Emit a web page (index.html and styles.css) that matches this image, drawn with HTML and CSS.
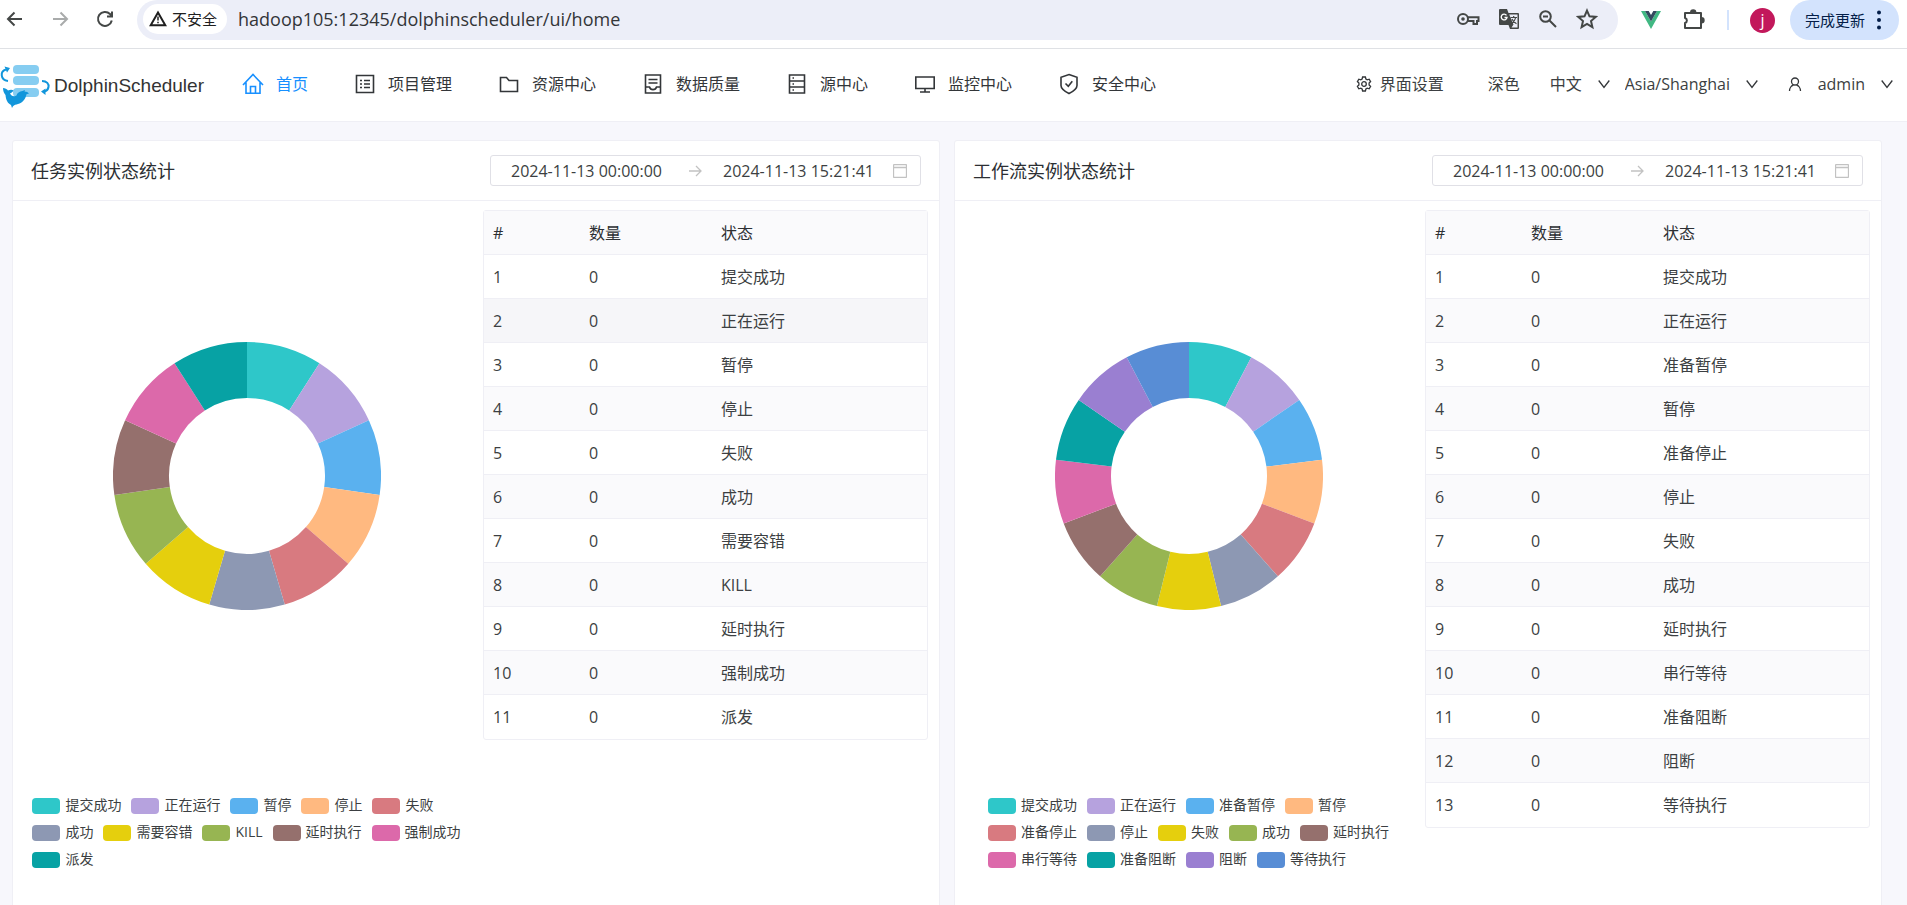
FILE: index.html
```html
<!DOCTYPE html>
<html lang="zh-CN">
<head>
  <meta charset="UTF-8" />
  <meta name="viewport" content="width=device-width, initial-scale=1.0" />
  <title>DolphinScheduler</title>
  <link rel="stylesheet" href="styles.css">
</head>
<body>
  <div class="browser-bar">
    <div class="history">
      <button class="tool" aria-label="后退"><svg width="20" height="20" viewBox="0 0 20 20"><path d="M17 10H3.5M9.500 3.500L3 10l6.500 6.500" /></svg></button>
      <button class="tool off" aria-label="前进" disabled><svg width="20" height="20" viewBox="0 0 20 20"><path d="M3 10h13.500M10.500 3.500L17 10l-6.500 6.500" /></svg></button>
      <button class="tool" aria-label="刷新"><svg width="20" height="20" viewBox="0 0 20 20"><path d="M16.800 11.500A7 7 0 1 1 15 5l1.500 1.500M17 2.500V7.500H12" /></svg></button>
    </div>
    <div class="omnibox">
      <button class="site-chip">
        <svg width="18" height="18" viewBox="0 0 18 18"><path d="M9 2.500L16.300 15.200H1.700z" /><path d="M9 6.500v4M9 11.800v1.500" stroke-width="1.500" /></svg>
        不安全
      </button>
      <input class="url" type="text" aria-label="地址" value="hadoop105:12345/dolphinscheduler/ui/home" />
      <button class="tool" aria-label="密码"><svg width="24" height="20" viewBox="0 0 24 20"><circle cx="7" cy="10" r="5" /><circle cx="7" cy="10" r="1.800" fill="#444746" stroke="none" /><path d="M11.500 8.200H22.500V12H21v3h-3.500v-3h-6" /></svg></button>
      <button class="tool" aria-label="翻译"><svg width="22" height="22" viewBox="0 0 22 22"><path d="M2 1h7l1.500 4H20a1 1 0 0 1 1 1v14a1 1 0 0 1-1 1h-8l-1.500-4H2a1 1 0 0 1-1-1V2a1 1 0 0 1 1-1z" fill="#444746" stroke="none" /><path d="M11.200 6.500H19.500V19.500H13.500l2-3z" fill="#eceef8" stroke="none" /><path d="M8.500 7.300A2.900 2.900 0 1 0 9 9.500H6.500" stroke="#fff" stroke-width="1.400" /><path d="M12.500 9.500h6.500M15.700 8v1.500M17.700 9.500c-.5 2.500-2 4.500-4 6M14 11c.8 2 2.500 3.700 4.500 4.800" stroke-width="1.200" /></svg></button>
      <button class="tool" aria-label="缩放"><svg width="20" height="20" viewBox="0 0 20 20"><circle cx="7.500" cy="7.500" r="5.300" /><path d="M11.500 11.500l6.500 6.500M5 7.500h5" /></svg></button>
      <button class="tool" aria-label="收藏"><svg width="22" height="22" viewBox="0 0 22 22"><path d="M11 2.600l2.500 5.700 6.200.6-4.700 4.100 1.400 6.100-5.400-3.200-5.400 3.200L7 13 2.300 8.900l6.200-.6z" /></svg></button>
    </div>
    <div class="extensions">
      <svg width="20" height="20" viewBox="0 0 20 20"><path d="M0 1h4l6 10.500L16 1h4L10 19z" fill="#41b883" /><path d="M4 1h3.700L10 5l2.300-4H16l-6 10.500z" fill="#34495e" /></svg>
      <button class="tool" aria-label="扩展程序"><svg width="24" height="24" viewBox="0 0 24 24"><path d="M3 5h16v15H3v-5a2.600 2.600 0 0 0 0-5z" stroke-linejoin="round" /><path d="M9 4.500a2.200 2.200 0 0 1 4.400 0zM19.500 10a2.200 2.200 0 0 1 0 4.400z" fill="#444746" /></svg></button>
      <span class="divider"></span>
      <button class="avatar">j</button>
      <button class="update">完成更新 <svg width="4" height="20" viewBox="0 0 4 20"><circle cx="2" cy="2.500" r="2" /><circle cx="2" cy="10" r="2" /><circle cx="2" cy="17.500" r="2" /></svg></button>
    </div>
  </div>

  <header class="navbar">
    <a href="#" class="logo">
      <svg width="50" height="44" viewBox="0 0 50 44">
        <g fill="#86cdf1"><rect x="13" y="1" width="26" height="9" rx="4" /><rect x="13" y="12" width="26" height="9" rx="4" /><rect x="13" y="24" width="26" height="9" rx="4" /></g>
        <g fill="none" stroke="#1296db" stroke-width="2"><path d="M8 17C0 16 0 7 6 5.500M42 17c5 0 7 3 6.500 6-.5 3-2 4-4 4.500" /></g>
        <path d="M4.500 2.500l5.500 1.500-3 4.500zM41 27.500l4.500-3V31z" fill="#1296db" />
        <path d="M3 24c2 .2 4 1 5 2.500 2-1 4-1 5.500-.2-.8 1.700-2 2.700-3.500 3C11 32 14 33 16.500 31.500c.5-2.500 3-4 6-4.500l2.500-1-.5 1.500c2 .2 3.500.8 4.500 2l-2.500.8c-1 5-4 8.500-8.500 9.700-2 .5-4 1-5 2.200L12 44l-1-3c-3-1.500-5-4.500-5.500-10C4 29 3 27 3 24z" fill="#1296db" />
      </svg>
      DolphinScheduler
    </a>
    <nav class="menu">
      <a href="#" class="active"><svg viewBox="0 0 22 22"><path d="M1 12L11 1.500 21 12M4 9.500V20.200h14V9.500M8.500 20v-6.500h5V20" /></svg>首页</a>
      <a href="#"><svg viewBox="0 0 22 22"><path d="M2.500 2.500h17v17h-17zM6 7.500h2M10 7.500h6M6 11h2M10 11h6M6 14.500h2M10 14.500h6" /></svg>项目管理</a>
      <a href="#"><svg viewBox="0 0 22 22"><path d="M2.500 4.500h6l2.500 3h8.500v11h-17z" /></svg>资源中心</a>
      <a href="#"><svg viewBox="0 0 22 22"><path d="M3.500 2h15v18h-15zM6.500 6.500h9M6.500 10h9M3.500 14h4c1 3.500 6 3.500 7 0h4" /></svg>数据质量</a>
      <a href="#"><svg viewBox="0 0 22 22"><path d="M3.500 2h15v18h-15zM3.500 8h15M3.500 14h15M6.500 5h1.500M6.500 11h1.500M6.500 17h1.500" /></svg>源中心</a>
      <a href="#"><svg viewBox="0 0 22 22"><path d="M1.800 4h18.400v11.500H1.800zM11 15.500v3.500M6 19h10" /></svg>监控中心</a>
      <a href="#"><svg viewBox="0 0 22 22"><path d="M11 1.500l8 2.700v8.300c0 3-4 6-8 8-4-2-8-5-8-8V4.200zM7.500 10.500l2.800 2.800 4-5" /></svg>安全中心</a>
    </nav>
    <div class="settings">
      <button class="ui-setting"><svg width="16" height="16" viewBox="0 0 16 16"><path d="M6.600 1h2.800l.5 2 1.300.8 2-.6 1.400 2.400-1.500 1.400v2l1.500 1.400-1.400 2.400-2-.6-1.300.8-.5 2H6.600l-.5-2-1.300-.8-2 .6-1.400-2.400L2.900 9V7L1.400 5.600l1.400-2.400 2 .6L6.100 3z" /><circle cx="8" cy="8" r="2.300" /></svg>界面设置</button>
      <button class="theme">深色</button>
      <label class="drop">
        <select aria-label="语言"><option>中文</option></select>
        <svg width="12" height="12" viewBox="0 0 12 12"><path d="M.7 2.500L6 9.500l5.300-7" /></svg>
      </label>
      <label class="drop">
        <select aria-label="时区"><option>Asia/Shanghai</option></select>
        <svg width="12" height="12" viewBox="0 0 12 12"><path d="M.7 2.500L6 9.500l5.300-7" /></svg>
      </label>
      <button class="user">
        <svg width="14" height="16" viewBox="0 0 14 16"><circle cx="7" cy="5.500" r="3.500" /><path d="M1.500 15c0-3 2-5.500 4-6M12.500 15c0-3-2-5.500-4-6" /></svg>
        admin
        <svg width="12" height="12" viewBox="0 0 12 12"><path d="M.7 2.500L6 9.500l5.300-7" /></svg>
      </button>
    </div>
  </header>

  <main id="cards"></main>

  <script>
    const colors = ['#2ec7c9', '#b6a2de', '#5ab1ef', '#ffb980', '#d87a80', '#8d98b3', '#e5cf0d',
      '#97b552', '#95706d', '#dc69aa', '#07a2a4', '#9a7fd1', '#588dd5'];

    // each inner list is one line of the legend
    const cards = [
      {
        title: '任务实例状态统计',
        states: [
          ['提交成功', '正在运行', '暂停', '停止', '失败'],
          ['成功', '需要容错', 'KILL', '延时执行', '强制成功'],
          ['派发']
        ],
        hover: 1
      },
      {
        title: '工作流实例状态统计',
        states: [
          ['提交成功', '正在运行', '准备暂停', '暂停'],
          ['准备停止', '停止', '失败', '成功', '延时执行'],
          ['串行等待', '准备阻断', '阻断', '等待执行']
        ]
      }
    ];

    function point(r, i, n) {
      const a = i / n * Math.PI * 2;
      return (134 + r * Math.sin(a)).toFixed(2) + ' ' + (134 - r * Math.cos(a)).toFixed(2);
    }

    function donut(n) {
      let paths = '';
      for (let i = 0; i < n; i++) {
        paths += `<path fill="${colors[i]}" d="M${point(134, i, n)}A134 134 0 0 1 ${point(134, i + 1, n)}L${point(78, i + 1, n)}A78 78 0 0 0 ${point(78, i, n)}Z" />`;
      }
      return `<svg class="donut" viewBox="0 0 268 268">${paths}</svg>`;
    }

    function legend(lines) {
      let i = 0;
      return lines.map(line => `<ul>${line.map(name =>
        `<li><svg width="28" height="16"><rect width="28" height="16" rx="4" fill="${colors[i++]}" /></svg>${name}</li>`
      ).join('')}</ul>`).join('');
    }

    document.getElementById('cards').innerHTML = cards.map(card => {
      const names = card.states.flat();
      const rows = names.map((name, i) =>
        `<tr${card.hover === i ? ' class="hover"' : ''}><td>${i + 1}</td><td>0</td><td>${name}</td></tr>`
      ).join('');

      return `
        <section class="card">
          <div class="card-header">
            <h2>${card.title}</h2>
            <div class="date-range">
              <input type="text" aria-label="开始时间" value="2024-11-13 00:00:00" />
              <svg class="to" width="14" height="14" viewBox="0 0 14 14"><path d="M1 7h12M8 2l5 5-5 5" /></svg>
              <input type="text" aria-label="结束时间" value="2024-11-13 15:21:41" />
              <svg class="calendar" width="14" height="14" viewBox="0 0 14 14"><path d="M.5 1.500a1 1 0 0 1 1-1h11a1 1 0 0 1 1 1v11a1 1 0 0 1-1 1h-11a1 1 0 0 1-1-1zM.5 3.500h13" /></svg>
            </div>
          </div>
          <div class="card-body">
            <div class="chart">
              ${donut(names.length)}
              <div class="legend">${legend(card.states)}</div>
            </div>
            <table>
              <thead><tr><th>#</th><th>数量</th><th>状态</th></tr></thead>
              <tbody>${rows}</tbody>
            </table>
          </div>
        </section>`;
    }).join('');
  </script>
</body>
</html>
```

FILE: styles.css
```css
* {
  box-sizing: border-box;
}

body {
  margin: 0;
  height: 100vh;
  display: flex;
  flex-direction: column;
  background-color: #f7f7fc;
  color: #3c3f42;
  font-family: "Open Sans", "Noto Sans CJK SC", sans-serif;
  font-size: 16px;
  line-height: 24px;
}

button, input, select {
  font: inherit;
  color: inherit;
  background: none;
  border: none;
  padding: 0;
  margin: 0;
  outline: none;
}

button {
  cursor: pointer;
}

svg {
  display: block;
  flex-shrink: 0;
}

/* browser bar */
.browser-bar {
  display: flex;
  height: 49px;
  background-color: white;
  border-bottom: 1px solid #dfe1e5;
  padding-bottom: 8px;
}

.history {
  display: flex;
  align-items: center;
  gap: 25px;
  padding: 0 22px 2px 5px;
}

.tool svg {
  fill: none;
  stroke: #444746;
  stroke-width: 2;
}

.off svg {
  stroke: #a9abab;
}

.omnibox {
  flex: 1;
  display: flex;
  align-items: center;
  gap: 18px;
  padding: 0 20px 2px 6px;
  background-color: #eceef8;
  border-radius: 20px;
}

.site-chip {
  display: flex;
  align-items: center;
  gap: 5px;
  height: 30px;
  padding: 0 10px 0 6px;
  margin-right: -7px;
  background-color: white;
  border-radius: 15px;
  font-size: 15px;
  color: #1f1f1f;
}

.site-chip svg {
  fill: none;
  stroke: #1f1f1f;
  stroke-width: 2;
}

.url {
  flex: 1;
  font-size: 18px;
  color: #333538;
}

.extensions {
  display: flex;
  align-items: center;
  gap: 21px;
  padding: 0 8px 0 23px;
}

.divider {
  width: 2px;
  height: 20px;
  background-color: #d3e3fd;
}

.avatar {
  width: 25px;
  height: 25px;
  border-radius: 50%;
  background-color: #c2185b;
  color: white;
  line-height: 22px;
}

.update {
  display: flex;
  align-items: center;
  gap: 12px;
  height: 40px;
  padding: 0 18px 0 15px;
  margin-left: -6px;
  border-radius: 20px;
  background-color: #d3e3fd;
  color: #041e49;
  font-size: 15px;
}

.update svg {
  fill: #041e49;
}

/* top navigation */
.navbar {
  display: flex;
  align-items: center;
  height: 73px;
  padding-bottom: 2px;
  background-color: white;
  border-bottom: 1px solid #efeff5;
}

.logo {
  display: flex;
  align-items: center;
  gap: 4px;
  width: 219px;
  padding-top: 4px;
  font-family: "Liberation Sans", Arial, sans-serif;
  font-size: 19px;
  color: #333;
  text-decoration: none;
}

.menu {
  display: flex;
  flex: 1;
}

.menu a {
  display: flex;
  align-items: center;
  gap: 12px;
  padding: 0 23px;
  color: #333639;
  text-decoration: none;
}

.menu a.active {
  color: #1890ff;
}

.menu svg {
  width: 22px;
  height: 22px;
  fill: none;
  stroke: currentColor;
  stroke-width: 1.6;
}

.settings {
  display: flex;
  align-items: center;
  padding-right: 14px;
}

.settings svg {
  fill: none;
  stroke: #333639;
  stroke-width: 1.3;
}

.ui-setting {
  display: flex;
  align-items: center;
  gap: 8px;
  margin-right: 44px;
}

.theme {
  margin-right: 30px;
}

.drop {
  display: flex;
  align-items: center;
  gap: 15px;
  margin-right: 15px;
}

.drop select {
  appearance: none;
}

.user {
  display: flex;
  align-items: center;
  gap: 16px;
  margin-left: 15px;
}

/* cards */
main {
  flex: 1;
  display: grid;
  grid-template-columns: 1fr 1fr;
  align-items: start;
  gap: 14px;
  padding: 18px 25px 18px 12px;
  overflow-y: auto;
  scrollbar-width: none;
}

.card {
  background-color: white;
  border: 1px solid #efeff5;
  border-radius: 3px;
}

.card-header {
  display: flex;
  align-items: center;
  justify-content: space-between;
  height: 60px;
  padding: 0 18px;
  border-bottom: 1px solid #efeff5;
}

.card-header h2 {
  margin: 0;
  font-size: 18px;
  font-weight: 400;
  color: #2c2f33;
}

.date-range {
  display: flex;
  align-items: center;
  width: 431px;
  height: 31px;
  padding: 0 13px 0 20px;
  border: 1px solid #e0e0e6;
  border-radius: 3px;
}

.date-range input {
  width: 156px;
}

.date-range svg {
  fill: none;
  stroke: #c2c2c2;
  stroke-width: 1.3;
}

.date-range .to {
  margin: 0 21px;
}

.date-range .calendar {
  margin-left: auto;
}

.card-body {
  display: grid;
  grid-template-columns: 1fr 1fr;
  align-items: start;
  gap: 14px;
  padding: 9px 11px;
}

.chart {
  display: flex;
  flex-direction: column;
  align-items: center;
  padding: 132px 0 60px;
}

.donut {
  width: 268px;
}

.legend {
  margin-top: 185px;
}

.legend ul {
  display: flex;
  gap: 10px;
  list-style: none;
  margin: 0 0 8px;
  padding: 0;
}

.legend li {
  display: flex;
  align-items: center;
  gap: 5px;
  font-size: 14px;
  line-height: 16px;
  white-space: nowrap;
}

.legend svg {
  margin-top: 3px;
}

table {
  width: 100%;
  table-layout: fixed;
  border: 1px solid #efeff5;
  border-radius: 3px;
  border-spacing: 0;
}

th, td {
  height: 44px;
  padding: 0 9px;
  text-align: left;
  font-weight: 400;
  border-bottom: 1px solid #efeff5;
}

th {
  background-color: #fafafc;
  color: #2c2f33;
}

th:nth-child(1) {
  width: 96px;
}

th:nth-child(2) {
  width: 132px;
}

tbody tr:nth-child(even) {
  background-color: #fafafc;
}

tbody tr.hover {
  background-color: #f6f6f9;
}

tbody tr:last-child td {
  border-bottom: none;
}
```
